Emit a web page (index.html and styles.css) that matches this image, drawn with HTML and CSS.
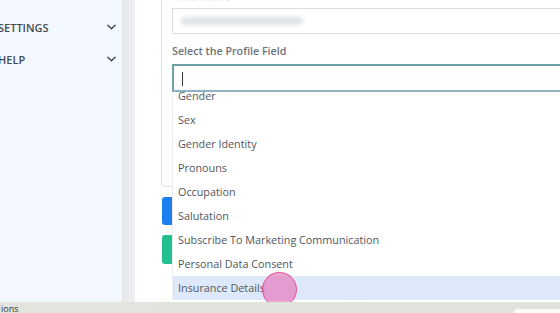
FILE: index.html
```html
<!DOCTYPE html>
<html lang="en">
<head>
    <meta charset="UTF-8">
    <meta name="viewport" content="width=device-width, initial-scale=1.0">
    <title>Profile Field Mapping</title>
    <link rel="stylesheet" href="styles.css">
</head>
<body>
    <div class="screen">
        <div class="workspace">
            <!-- Sidebar menu -->
            <aside class="sidebar">
                <div class="nav-item">
                    <span>SETTINGS</span>
                    <svg class="chevron" viewBox="0 0 10 6"><path d="M1 1l4 4 4-4"/></svg>
                </div>
                <div class="nav-item">
                    <span>HELP</span>
                    <svg class="chevron" viewBox="0 0 10 6"><path d="M1 1l4 4 4-4"/></svg>
                </div>
            </aside>
            <div class="gutter"></div>

            <!-- Main form -->
            <main class="main">
                <section class="card">
                    <label class="field-label faded">Field Name</label>
                    <div class="text-input"><span class="blurred"></span></div>

                    <label class="field-label">Select the Profile Field</label>
                    <div class="select">
                        <div class="select-input"><span class="caret"></span></div>
                        <div class="options">
                            <ul class="option-list">
                                <li>Gender</li>
                                <li>Sex</li>
                                <li>Gender Identity</li>
                                <li>Pronouns</li>
                                <li>Occupation</li>
                                <li>Salutation</li>
                                <li>Subscribe To Marketing Communication</li>
                                <li>Personal Data Consent</li>
                                <li class="active">Insurance Details</li>
                            </ul>
                        </div>
                    </div>
                </section>

                <div class="actions">
                    <button class="btn btn-blue"></button>
                    <button class="btn btn-green"></button>
                </div>

                <span class="click-marker"></span>
            </main>
        </div>
        <footer class="taskbar">
            <span class="taskbar-text">ions</span>
            <span class="taskbar-pill"></span>
        </footer>
    </div>
</body>
</html>
```

FILE: styles.css
```css
/* Base */
* {
    box-sizing: border-box;
}

body {
    margin: 0;
    width: 560px;
    height: 313px;
    overflow: hidden;
    font-family: "Open Sans", "Noto Sans", sans-serif;
    color: #495057;
    background: #fff;
}

.screen {
    display: flex;
    flex-direction: column;
    height: 313px;
}

.workspace {
    display: flex;
    height: 302px;
}

/* Sidebar */
.sidebar {
    width: 122px;
    flex-shrink: 0;
    background: #f3f8fe;
    padding-top: 11px;
}

.nav-item {
    display: flex;
    align-items: center;
    justify-content: space-between;
    height: 32px;
    padding-right: 6px;
    font-size: 11px;
    font-weight: 600;
    color: #454b53;
}

.nav-item span {
    margin-left: -2px;
}

.chevron {
    width: 9px;
    height: 6px;
    fill: none;
    stroke: #454b53;
    stroke-width: 1.6;
    stroke-linecap: round;
    stroke-linejoin: round;
}

.gutter {
    width: 13px;
    flex-shrink: 0;
    background: linear-gradient(to right, #e6e7eb, #eeeff2);
}

/* Main area */
.main {
    position: relative;
    flex: 1;
    overflow: hidden;
    background: #fff;
}

.card {
    width: 520px;
    margin: -20px 0 0 26px;
    padding: 9px 0 94px 10px;
    border: 1px solid #dfe2e5;
    border-radius: 4px;
}

.field-label {
    display: block;
    height: 15px;
    line-height: 15px;
    font-size: 10.7px;
    font-weight: 600;
    color: #6c737b;
}

.field-label.faded {
    color: #eceef0;
    margin-bottom: 3px;
}

.text-input {
    height: 26px;
    border: 1px solid #dadee1;
    padding: 8px 0 0 8px;
    margin-bottom: 10px;
}

.blurred {
    display: block;
    width: 122px;
    height: 8px;
    background: #dfe2e5;
    border-radius: 4px;
    filter: blur(2px);
}

.field-label + .select {
    margin-top: 5px;
}

.select {
    position: relative;
}

.select-input {
    height: 28px;
    border: 2px solid #6fa2a8;
    border-bottom-color: #8eb2c2;
    padding: 6px 0 0 8px;
    background: #fefefe;
}

.caret {
    display: block;
    width: 1px;
    height: 14px;
    background: #333;
}

/* Dropdown menu */
.options {
    position: absolute;
    top: 100%;
    left: 0;
    width: 100%;
    height: 208px;
    overflow: hidden;
    background: #fff;
    border-left: 1px solid #eceef0;
}

.option-list {
    list-style: none;
    margin: -8px 0 0;
    padding: 0;
}

.option-list li {
    height: 24px;
    line-height: 24px;
    padding-left: 5px;
    font-size: 10.8px;
    color: #50555b;
}

.option-list li.active {
    background: #dde9fa;
}

/* Buttons under the card */
.actions {
    display: flex;
    flex-direction: column;
    gap: 10px;
    margin: 10px 0 0 27px;
}

.btn {
    width: 90px;
    border: none;
    border-radius: 3px;
}

.btn-blue {
    height: 28px;
    background: #1b7ef1;
}

.btn-green {
    height: 29px;
    background: #1fbf8e;
}

/* Click indicator */
.click-marker {
    position: absolute;
    left: 127px;
    top: 272px;
    width: 35px;
    height: 35px;
    border-radius: 50%;
    background: rgba(230, 120, 185, 0.68);
    border: 1.5px solid rgba(222, 80, 150, 0.85);
}

/* Bottom bar */
.taskbar {
    position: relative;
    height: 11px;
    background: linear-gradient(to right, #e3e4de, #e2e2dc);
    overflow: hidden;
}

.taskbar-text {
    position: absolute;
    left: 1px;
    top: 2px;
    font-size: 9px;
    line-height: 10px;
    color: #333;
}

.taskbar-pill {
    position: absolute;
    left: 513px;
    top: 7px;
    width: 60px;
    height: 12px;
    border-radius: 5px;
    background: #fbfbfa;
}
```
